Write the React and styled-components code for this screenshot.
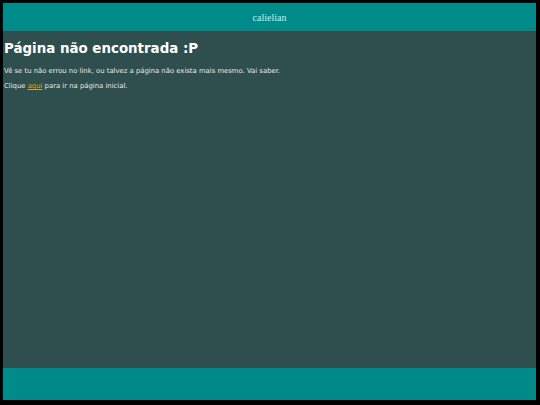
import React from 'react'
import styled, {createGlobalStyle} from "styled-components";

const GlobalStyle = createGlobalStyle`
  html, body {
    margin: 0;
    padding: 0;
    background: #000;
  }
  body {
    padding: 3px 4px 5px 3px;
    box-sizing: border-box;
    height: 100vh;
  }
  #root {
    height: 100%;
  }
`;

const Page = styled.div`
  display: flex;
  flex-direction: column;
  height: 100%;
  background-color: #2f4f4f;
  font-family: "DejaVu Sans", sans-serif;
  color: #e8e8e8;
`;

const Header = styled.header`
  display: flex;
  align-items: center;
  justify-content: center;
  height: 28px;
  background-color: #008b8b;
  font-family: "Liberation Serif", serif;
  font-size: 10px;
  color: #c6eeee;
`;

const Main = styled.main`
  flex: 1;
  padding: 0 1px;
`;

const Title = styled.h1`
  margin: 10px 0 11px;
  font-size: 13.4px;
  font-weight: bold;
  color: #ffffff;
`;

const Text = styled.p`
  margin: 7px 0;
  font-size: 6.85px;
  line-height: 8px;
`;

const Link = styled.a`
  color: #daa520;
  text-decoration: underline;
`;

const Footer = styled.footer`
  height: 32px;
  background-color: #008b8b;
`;

const App = () => {
  return (
    <>
      <GlobalStyle/>
      <Page>
        <Header>calielian</Header>
        <Main>
          <Title>Página não encontrada :P</Title>
          <Text>Vê se tu não errou no link, ou talvez a página não exista mais mesmo. Vai saber.</Text>
          <Text>Clique <Link href="#">aqui</Link> para ir na página inicial.</Text>
        </Main>
        <Footer/>
      </Page>
    </>
  )
}

export default App
